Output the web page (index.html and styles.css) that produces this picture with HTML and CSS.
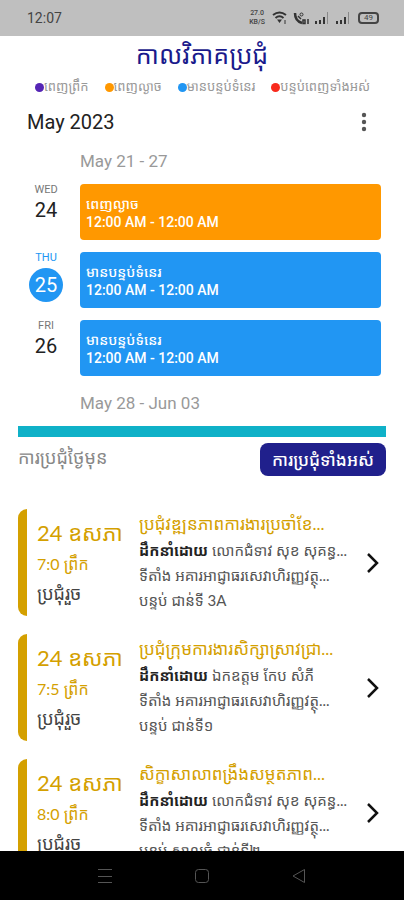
FILE: index.html
```html
<!DOCTYPE html>
<html lang="km">
<head>
<meta charset="utf-8">
<meta name="viewport" content="width=device-width, initial-scale=1">
<title>កាលវិភាគប្រជុំ</title>
<link rel="stylesheet" href="styles.css">
</head>
<body>
<div class="app">
  <header class="status">
    <span class="clock">12:07</span>
    <div class="status-icons">
      <span class="speed"><span>27.0</span><span>KB/S</span></span>
      <svg width="16" height="14" viewBox="0 0 16 14" fill="none" stroke="#333" stroke-width="2"><path d="M1 4Q7.500-1 14 4M3.500 7Q7.500 3.500 11.500 7"/><path d="M5 8.500h5L7.500 12z" fill="#333" stroke="none"/><path d="M13 9v4" stroke-width="1"/></svg>
      <svg width="16" height="14" viewBox="0 0 16 14" fill="none" stroke="#333"><path d="M2 2Q2 10 9 12" stroke-width="2.500"/><circle cx="8.500" cy="3.500" r="1.500"/><path d="M5 5l3 3" stroke-width="1.500"/><path d="M10 9h2v3.500h-2zM15 8v5" stroke-width="1.500"/></svg>
      <svg class="signal" width="16" height="14" viewBox="0 0 16 14"><path d="M1 10h2v3H1zM5 9h2v4H5zM9 6h2v7H9z" fill="#333"/><path d="M13 1h1v12h-1z" fill="#888"/></svg>
      <svg class="signal" width="16" height="14" viewBox="0 0 16 14"><path d="M1 10h2v3H1zM5 9h2v4H5zM9 6h2v7H9z" fill="#333"/><path d="M13 1h1v12h-1z" fill="#888"/></svg>
      <span class="battery">49</span>
    </div>
  </header>

  <main class="screen">
    <h1 class="title">កាលវិភាគប្រជុំ</h1>
    <ul class="legend">
      <li><i class="dot purple"></i>ពេញព្រឹក</li>
      <li><i class="dot orange"></i>ពេញល្ងាច</li>
      <li><i class="dot blue"></i>មានបន្ទប់ទំនេរ</li>
      <li><i class="dot red"></i>បន្ទប់ពេញទាំងអស់</li>
    </ul>

    <section class="calendar">
      <div class="month">
        <h2>May 2023</h2>
        <button class="more" type="button" aria-label="More"><svg width="6" height="20" viewBox="0 0 6 20" fill="#555"><circle cx="3" cy="3" r="2.200"/><circle cx="3" cy="10" r="2.200"/><circle cx="3" cy="17" r="2.200"/></svg></button>
      </div>
      <p class="week">May 21 - 27</p>
      <div class="days">
        <div class="day">
          <div class="date"><span class="name">WED</span><span class="number">24</span></div>
          <div class="event orange"><span>ពេញល្ងាច</span><span class="hours">12:00 AM - 12:00 AM</span></div>
        </div>
        <div class="day today">
          <div class="date"><span class="name">THU</span><span class="number">25</span></div>
          <div class="event blue"><span>មានបន្ទប់ទំនេរ</span><span class="hours">12:00 AM - 12:00 AM</span></div>
        </div>
        <div class="day">
          <div class="date"><span class="name">FRI</span><span class="number">26</span></div>
          <div class="event blue"><span>មានបន្ទប់ទំនេរ</span><span class="hours">12:00 AM - 12:00 AM</span></div>
        </div>
      </div>
      <p class="week next">May 28 - Jun 03</p>
    </section>

    <section class="previous">
      <div class="bar">
        <h2>ការប្រជុំថ្ងៃមុន</h2>
        <button class="all" type="button">ការប្រជុំទាំងអស់</button>
      </div>
      <ul class="meetings">
        <li class="meeting">
          <div class="when"><span class="day-month">24 ឧសភា</span><span class="time">7:0 ព្រឹក</span><span class="state">ប្រជុំរួច</span></div>
          <div class="details">
            <h3>ប្រជុំវឌ្ឍនភាពការងារប្រចាំខែ...</h3>
            <p><b>ដឹកនាំដោយ</b> លោកជំទាវ សុខ សុគន្ធ...</p>
            <p>ទីតាំង អគារអាជ្ញាធរសេវាហិរញ្ញវត្ថុ...</p>
            <p>បន្ទប់ ជាន់ទី 3A</p>
          </div>
          <button class="open" type="button" aria-label="Open"><svg width="14" height="22" viewBox="0 0 14 22" fill="none" stroke="#111" stroke-width="2.500"><path d="M2 2l9 9-9 9"/></svg></button>
        </li>
        <li class="meeting">
          <div class="when"><span class="day-month">24 ឧសភា</span><span class="time">7:5 ព្រឹក</span><span class="state">ប្រជុំរួច</span></div>
          <div class="details">
            <h3>ប្រជុំក្រុមការងារសិក្សាស្រាវជ្រា...</h3>
            <p><b>ដឹកនាំដោយ</b> ឯកឧត្តម កែប សំភី</p>
            <p>ទីតាំង អគារអាជ្ញាធរសេវាហិរញ្ញវត្ថុ...</p>
            <p>បន្ទប់ ជាន់ទី១</p>
          </div>
          <button class="open" type="button" aria-label="Open"><svg width="14" height="22" viewBox="0 0 14 22" fill="none" stroke="#111" stroke-width="2.500"><path d="M2 2l9 9-9 9"/></svg></button>
        </li>
        <li class="meeting">
          <div class="when"><span class="day-month">24 ឧសភា</span><span class="time">8:0 ព្រឹក</span><span class="state">ប្រជុំរួច</span></div>
          <div class="details">
            <h3>សិក្ខាសាលាពង្រឹងសម្ថតភាព...</h3>
            <p><b>ដឹកនាំដោយ</b> លោកជំទាវ សុខ សុគន្ធ...</p>
            <p>ទីតាំង អគារអាជ្ញាធរសេវាហិរញ្ញវត្ថុ...</p>
            <p>បន្ទប់ សាលធំ ជាន់ទី២</p>
          </div>
          <button class="open" type="button" aria-label="Open"><svg width="14" height="22" viewBox="0 0 14 22" fill="none" stroke="#111" stroke-width="2.500"><path d="M2 2l9 9-9 9"/></svg></button>
        </li>
      </ul>
    </section>
  </main>

  <nav class="system">
    <button type="button" aria-label="Recent apps"><svg width="16" height="16" viewBox="0 0 16 16" fill="none" stroke="#555"><path d="M1 1.500h14M1 8.500h14M1 14.500h14"/></svg></button>
    <button type="button" aria-label="Home"><svg width="16" height="16" viewBox="0 0 16 16" fill="none" stroke="#555"><rect x="1.500" y="1.500" width="13" height="13" rx="3"/></svg></button>
    <button type="button" aria-label="Back"><svg width="16" height="16" viewBox="0 0 16 16" fill="none" stroke="#555"><path d="M13.500 1.500v13L2 8z" stroke-linejoin="round"/></svg></button>
  </nav>
</div>
</body>
</html>
```
FILE: styles.css
```css
* { box-sizing: border-box; }
body {
  margin: 0;
  background: #fff;
  color: #222;
  font-family: Roboto, "Noto Sans", "Noto Sans Khmer", sans-serif;
}
h1, h2, h3, p, ul { margin: 0; padding: 0; font-weight: 400; }
ul { list-style: none; }
button { border: 0; padding: 0; background: none; font: inherit; color: inherit; }
svg { display: block; }

.app { display: flex; flex-direction: column; height: 100vh; }

.status {
  flex: none;
  display: flex;
  align-items: center;
  justify-content: space-between;
  height: 36px;
  padding: 0 25px 0 27px;
  background: #bfbfbf;
  color: #444;
}
.clock { font-size: 14px; }
.status-icons { display: flex; align-items: center; gap: 5px; }
.speed { display: flex; flex-direction: column; margin-right: 2px; font-size: 7px; font-weight: 500; line-height: 9px; text-align: center; }
.battery {
  width: 21px;
  height: 12px;
  margin-left: 2px;
  border: 2px solid #444;
  border-radius: 4px;
  font-size: 8px;
  line-height: 8px;
  text-align: center;
}

.screen { flex: 1; min-height: 0; overflow: hidden; }
.title { color: #1a1a8c; font-size: 25px; line-height: 40px; text-align: center; }
.legend {
  display: flex;
  justify-content: space-between;
  padding: 0 34px 0 35px;
  color: #999;
  font-size: 13px;
  line-height: 22px;
  white-space: nowrap;
}
.legend li { display: flex; align-items: center; }
.dot { width: 9px; height: 9px; border-radius: 50%; }
.purple { background: #5525b5; }
.orange { background: #ff9800; }
.blue { background: #2196f3; }
.red { background: #f82a1c; }

.calendar { padding: 0 23px 0 27px; }
.month { display: flex; align-items: center; justify-content: space-between; height: 48px; }
.month h2 { font-size: 20px; }
.more { padding: 0 14px 0 0; }
.week { padding-left: 53px; color: #999; font-size: 17px; line-height: 30px; }
.days { display: flex; flex-direction: column; gap: 12px; margin: 8px 0 12px; }
.day { display: flex; gap: 15px; height: 56px; }
.date { display: flex; flex-direction: column; align-items: center; width: 38px; }
.name { color: #777; font-size: 11px; line-height: 12px; }
.number { width: 34px; height: 34px; font-size: 20px; line-height: 28px; text-align: center; }
.today .name { color: #2196f3; }
.today .number { margin-top: 4px; border-radius: 50%; background: #2196f3; color: #fff; line-height: 34px; }
.event {
  flex: 1;
  display: flex;
  flex-direction: column;
  justify-content: flex-end;
  padding: 9px 6px;
  border-radius: 4px;
  color: #fff;
  font-size: 14px;
  font-weight: 500;
  line-height: 18px;
}

.previous { margin: 8px 18px 0; border-top: 11px solid #0fb1c8; }
.bar { display: flex; align-items: flex-start; justify-content: space-between; padding-top: 6px; }
.bar h2 { color: #888; font-size: 18px; line-height: 30px; }
.all {
  height: 33px;
  padding: 0 12px;
  border-radius: 8px;
  background: #20208c;
  color: #fff;
  font-size: 17px;
  font-weight: 500;
  line-height: 30px;
}
.meetings {
  display: flex;
  flex-direction: column;
  gap: 18px;
  margin-top: 33px;
  font-family: Lato, "Noto Sans Khmer", sans-serif;
}
.meeting {
  display: flex;
  height: 107px;
  border-left: 9px solid #d4a000;
  border-radius: 9px 0 0 9px;
  white-space: nowrap;
}
.when { display: flex; flex-direction: column; width: 112px; padding: 9px 0 0 10px; color: #d4a000; }
.day-month { font-size: 22px; line-height: 30px; }
.time { font-size: 16px; line-height: 32px; }
.state { color: #444; font-size: 18px; line-height: 26px; }
.details { flex: 1; min-width: 0; color: #555; }
.details h3 { color: #d4a000; font-size: 17px; line-height: 29px; }
.details p { font-size: 15px; line-height: 25px; }
.details b { color: #222; }
.open { width: 26px; padding-left: 6px; }

.system {
  flex: none;
  display: flex;
  align-items: center;
  justify-content: center;
  gap: 81px;
  height: 49px;
  background: #000;
}
```
